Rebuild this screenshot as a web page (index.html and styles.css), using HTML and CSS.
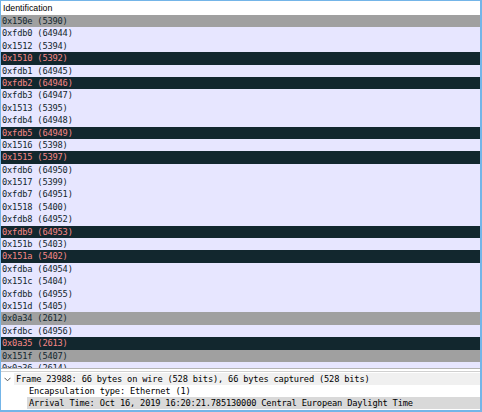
FILE: index.html
```html
<!DOCTYPE html>
<html>
<head>
<meta charset="utf-8">
<link rel="stylesheet" href="styles.css">
</head>
<body>
<div class="window">
  <div class="header">Identification</div>
  <div class="list">
    <div class="row grey">0x150e (5390)</div>
    <div class="row lav">0xfdb0 (64944)</div>
    <div class="row lav">0x1512 (5394)</div>
    <div class="row dark">0x1510 (5392)</div>
    <div class="row lav">0xfdb1 (64945)</div>
    <div class="row dark">0xfdb2 (64946)</div>
    <div class="row lav">0xfdb3 (64947)</div>
    <div class="row lav">0x1513 (5395)</div>
    <div class="row lav">0xfdb4 (64948)</div>
    <div class="row dark">0xfdb5 (64949)</div>
    <div class="row lav">0x1516 (5398)</div>
    <div class="row dark">0x1515 (5397)</div>
    <div class="row lav">0xfdb6 (64950)</div>
    <div class="row lav">0x1517 (5399)</div>
    <div class="row lav">0xfdb7 (64951)</div>
    <div class="row lav">0x1518 (5400)</div>
    <div class="row lav">0xfdb8 (64952)</div>
    <div class="row dark">0xfdb9 (64953)</div>
    <div class="row lav">0x151b (5403)</div>
    <div class="row dark">0x151a (5402)</div>
    <div class="row lav">0xfdba (64954)</div>
    <div class="row lav">0x151c (5404)</div>
    <div class="row lav">0xfdbb (64955)</div>
    <div class="row lav">0x151d (5405)</div>
    <div class="row grey">0x0a34 (2612)</div>
    <div class="row lav">0xfdbc (64956)</div>
    <div class="row dark">0x0a35 (2613)</div>
    <div class="row grey">0x151f (5407)</div>
    <div class="row lav">0x0a36 (2614)</div>
  </div>
  <div class="splitter"></div>
  <div class="details">
    <div class="drow frame">
      <svg class="chev" width="7" height="5" viewBox="0 0 7 5"><path d="M0.5 0.8 L3.5 3.8 L6.5 0.8" fill="none" stroke="#555" stroke-width="1"/></svg>
      <span class="dtext">Frame 23988: 66 bytes on wire (528 bits), 66 bytes captured (528 bits)</span>
    </div>
    <div class="drow child"><span class="dtext">Encapsulation type: Ethernet (1)</span></div>
    <div class="drow child sel"><span class="dtext">Arrival Time: Oct 16, 2019 16:20:21.785130000 Central European Daylight Time</span></div>
  </div>
</div>
</body>
</html>
```
FILE: styles.css
```css
html, body {
  margin: 0;
  padding: 0;
  background: #ffffff;
}
.window {
  width: 482px;
  height: 412px;
  box-sizing: border-box;
  border-top: 1px solid #74b5e8;
  border-left: 1px solid #74b5e8;
  border-right: 2px solid #74b5e8;
  border-bottom: 2px solid #74b5e8;
  display: flex;
  flex-direction: column;
  overflow: hidden;
  background: #fff;
}
.header {
  height: 14px;
  flex: none;
  font-family: "Liberation Sans", Arial, sans-serif;
  font-size: 8.8px;
  line-height: 14px;
  color: #000;
  padding-left: 2px;
  background: #fff;
}
.list {
  height: 353px;
  flex: none;
  overflow: hidden;
  font-family: "DejaVu Sans Mono", monospace;
  font-size: 8.7px;
  letter-spacing: -0.18px;
}
.row {
  height: 12.4px;
  line-height: 12.4px;
  padding-left: 1px;
  white-space: nowrap;
}
.grey { background: #a0a0a0; color: #12272e; }
.lav { background: #e7e6ff; color: #12272e; }
.dark { background: #12272e; color: #f78787; }
.splitter {
  height: 2px;
  flex: none;
  border-top: 1px solid #b4b4b4;
  border-bottom: 1px solid #d0d0d0;
  background: #fff;
}
.details {
  flex: 1;
  padding-top: 1px;
  font-family: "DejaVu Sans Mono", monospace;
  font-size: 8.7px;
  letter-spacing: -0.18px;
  color: #000;
  background: #fff;
}
.drow {
  height: 12px;
  line-height: 12px;
  display: flex;
  align-items: center;
  white-space: nowrap;
}
.frame {
  padding-left: 3px;
}
.chev {
  flex: none;
  margin-right: 3px;
}
.frame .dtext {
  flex: 1;
  background: #f0f0f0;
  padding-left: 2px;
  height: 12px;
}
.child {
  padding-left: 26px;
}
.child .dtext {
  flex: 1;
  padding-left: 2px;
  height: 12px;
}
.sel .dtext {
  background: #d9d9d9;
}
```
